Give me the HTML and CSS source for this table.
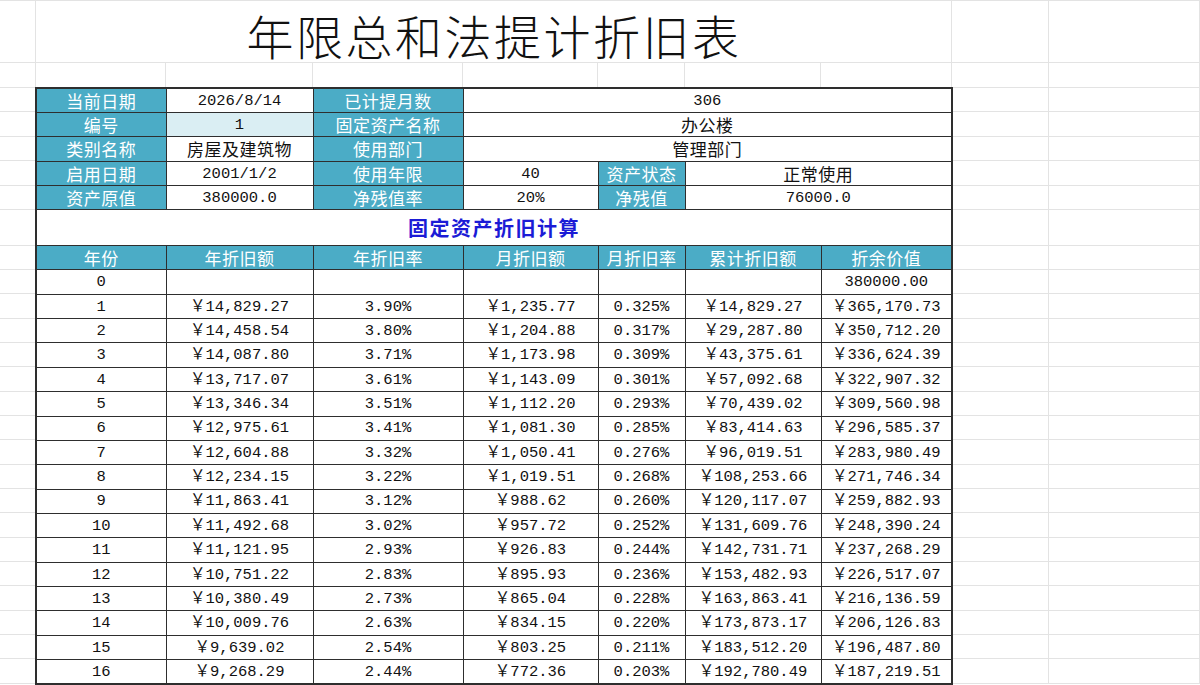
FILE: index.html
```html
<!DOCTYPE html>
<html lang="zh-CN">
<head>
<meta charset="utf-8">
<title>年限总和法提计折旧表</title>
<link rel="stylesheet" href="styles.css">
</head>
<body>
<table class="sheet">
  <colgroup>
    <col class="c0"><col class="c1"><col class="c2"><col class="c3"><col class="c4"><col class="c5"><col class="c6"><col class="c7"><col class="c8"><col class="c9">
  </colgroup>
  <tr class="r-title">
    <td class="g top"></td><td class="title top" colspan="7">年限总和法提计折旧表</td><td class="g top"></td><td class="g top"></td>
  </tr>
  <tr class="r-gap">
    <td class="g"></td><td class="g nb"></td><td class="g nb"></td><td class="g nb"></td><td class="g nb"></td><td class="g nb"></td><td class="g nb"></td><td class="g nb"></td><td class="g"></td><td class="g"></td>
  </tr>
  <tr class="r-info">
    <td class="g nr"></td><td class="b h L T">当前日期</td><td class="b T">2026/8/14</td><td class="b h T">已计提月数</td><td class="b R T" colspan="4">306</td><td class="g"></td><td class="g"></td>
  </tr>
  <tr class="r-info">
    <td class="g nr"></td><td class="b h L">编号</td><td class="b lb">1</td><td class="b h">固定资产名称</td><td class="b t R" colspan="4">办公楼</td><td class="g"></td><td class="g"></td>
  </tr>
  <tr class="r-info">
    <td class="g nr"></td><td class="b h L">类别名称</td><td class="b t">房屋及建筑物</td><td class="b h">使用部门</td><td class="b t R" colspan="4">管理部门</td><td class="g"></td><td class="g"></td>
  </tr>
  <tr class="r-info">
    <td class="g nr"></td><td class="b h L">启用日期</td><td class="b">2001/1/2</td><td class="b h">使用年限</td><td class="b">40</td><td class="b h">资产状态</td><td class="b t R" colspan="2">正常使用</td><td class="g"></td><td class="g"></td>
  </tr>
  <tr class="r-info">
    <td class="g nr"></td><td class="b h L">资产原值</td><td class="b">380000.0</td><td class="b h">净残值率</td><td class="b">20%</td><td class="b h">净残值</td><td class="b R" colspan="2">76000.0</td><td class="g"></td><td class="g"></td>
  </tr>
  <tr class="r-sec">
    <td class="g nr"></td><td class="b sec L R" colspan="7">固定资产折旧计算</td><td class="g"></td><td class="g"></td>
  </tr>
  <tr class="r-head">
    <td class="g nr"></td><td class="b h L">年份</td><td class="b h">年折旧额</td><td class="b h">年折旧率</td><td class="b h">月折旧额</td><td class="b h">月折旧率</td><td class="b h">累计折旧额</td><td class="b h R">折余价值</td><td class="g"></td><td class="g"></td>
  </tr>
  <tr class="r-data"><td class="g nr"></td><td class="b L">0</td><td class="b"></td><td class="b"></td><td class="b"></td><td class="b"></td><td class="b"></td><td class="b R">380000.00</td><td class="g"></td><td class="g"></td></tr>
  <tr class="r-data"><td class="g nr"></td><td class="b L">1</td><td class="b">￥14,829.27</td><td class="b">3.90%</td><td class="b">￥1,235.77</td><td class="b">0.325%</td><td class="b">￥14,829.27</td><td class="b R">￥365,170.73</td><td class="g"></td><td class="g"></td></tr>
  <tr class="r-data"><td class="g nr"></td><td class="b L">2</td><td class="b">￥14,458.54</td><td class="b">3.80%</td><td class="b">￥1,204.88</td><td class="b">0.317%</td><td class="b">￥29,287.80</td><td class="b R">￥350,712.20</td><td class="g"></td><td class="g"></td></tr>
  <tr class="r-data"><td class="g nr"></td><td class="b L">3</td><td class="b">￥14,087.80</td><td class="b">3.71%</td><td class="b">￥1,173.98</td><td class="b">0.309%</td><td class="b">￥43,375.61</td><td class="b R">￥336,624.39</td><td class="g"></td><td class="g"></td></tr>
  <tr class="r-data"><td class="g nr"></td><td class="b L">4</td><td class="b">￥13,717.07</td><td class="b">3.61%</td><td class="b">￥1,143.09</td><td class="b">0.301%</td><td class="b">￥57,092.68</td><td class="b R">￥322,907.32</td><td class="g"></td><td class="g"></td></tr>
  <tr class="r-data"><td class="g nr"></td><td class="b L">5</td><td class="b">￥13,346.34</td><td class="b">3.51%</td><td class="b">￥1,112.20</td><td class="b">0.293%</td><td class="b">￥70,439.02</td><td class="b R">￥309,560.98</td><td class="g"></td><td class="g"></td></tr>
  <tr class="r-data"><td class="g nr"></td><td class="b L">6</td><td class="b">￥12,975.61</td><td class="b">3.41%</td><td class="b">￥1,081.30</td><td class="b">0.285%</td><td class="b">￥83,414.63</td><td class="b R">￥296,585.37</td><td class="g"></td><td class="g"></td></tr>
  <tr class="r-data"><td class="g nr"></td><td class="b L">7</td><td class="b">￥12,604.88</td><td class="b">3.32%</td><td class="b">￥1,050.41</td><td class="b">0.276%</td><td class="b">￥96,019.51</td><td class="b R">￥283,980.49</td><td class="g"></td><td class="g"></td></tr>
  <tr class="r-data"><td class="g nr"></td><td class="b L">8</td><td class="b">￥12,234.15</td><td class="b">3.22%</td><td class="b">￥1,019.51</td><td class="b">0.268%</td><td class="b">￥108,253.66</td><td class="b R">￥271,746.34</td><td class="g"></td><td class="g"></td></tr>
  <tr class="r-data"><td class="g nr"></td><td class="b L">9</td><td class="b">￥11,863.41</td><td class="b">3.12%</td><td class="b">￥988.62</td><td class="b">0.260%</td><td class="b">￥120,117.07</td><td class="b R">￥259,882.93</td><td class="g"></td><td class="g"></td></tr>
  <tr class="r-data"><td class="g nr"></td><td class="b L">10</td><td class="b">￥11,492.68</td><td class="b">3.02%</td><td class="b">￥957.72</td><td class="b">0.252%</td><td class="b">￥131,609.76</td><td class="b R">￥248,390.24</td><td class="g"></td><td class="g"></td></tr>
  <tr class="r-data"><td class="g nr"></td><td class="b L">11</td><td class="b">￥11,121.95</td><td class="b">2.93%</td><td class="b">￥926.83</td><td class="b">0.244%</td><td class="b">￥142,731.71</td><td class="b R">￥237,268.29</td><td class="g"></td><td class="g"></td></tr>
  <tr class="r-data"><td class="g nr"></td><td class="b L">12</td><td class="b">￥10,751.22</td><td class="b">2.83%</td><td class="b">￥895.93</td><td class="b">0.236%</td><td class="b">￥153,482.93</td><td class="b R">￥226,517.07</td><td class="g"></td><td class="g"></td></tr>
  <tr class="r-data"><td class="g nr"></td><td class="b L">13</td><td class="b">￥10,380.49</td><td class="b">2.73%</td><td class="b">￥865.04</td><td class="b">0.228%</td><td class="b">￥163,863.41</td><td class="b R">￥216,136.59</td><td class="g"></td><td class="g"></td></tr>
  <tr class="r-data"><td class="g nr"></td><td class="b L">14</td><td class="b">￥10,009.76</td><td class="b">2.63%</td><td class="b">￥834.15</td><td class="b">0.220%</td><td class="b">￥173,873.17</td><td class="b R">￥206,126.83</td><td class="g"></td><td class="g"></td></tr>
  <tr class="r-data"><td class="g nr"></td><td class="b L">15</td><td class="b">￥9,639.02</td><td class="b">2.54%</td><td class="b">￥803.25</td><td class="b">0.211%</td><td class="b">￥183,512.20</td><td class="b R">￥196,487.80</td><td class="g"></td><td class="g"></td></tr>
  <tr class="r-data"><td class="g nr"></td><td class="b L Bm">16</td><td class="b Bm">￥9,268.29</td><td class="b Bm">2.44%</td><td class="b Bm">￥772.36</td><td class="b Bm">0.203%</td><td class="b Bm">￥192,780.49</td><td class="b R Bm">￥187,219.51</td><td class="g"></td><td class="g"></td></tr>
</table>
</body>
</html>
```
FILE: styles.css
```css
* { box-sizing: border-box; }
html, body { margin: 0; padding: 0; background: #fff; }
body { width: 1200px; height: 685px; overflow: hidden; }

.sheet {
  border-collapse: collapse;
  table-layout: fixed;
  width: 1200px;
  font-family: "Liberation Mono", "Noto Sans CJK SC", monospace;
  font-size: 15.5px;
  color: #111;
}
.c0 { width: 36px; }
.c1 { width: 130px; }
.c2 { width: 147px; }
.c3 { width: 150px; }
.c4 { width: 135px; }
.c5 { width: 87px; }
.c6 { width: 136px; }
.c7 { width: 131px; }
.c8 { width: 97px; }
.c9 { width: 151px; }

td {
  padding: 0;
  text-align: center;
  vertical-align: middle;
  line-height: 1;
  white-space: nowrap;
  overflow: hidden;
}

.r-title { height: 63px; }
.r-gap { height: 25px; }
.r-info { height: 24.4px; }
.r-sec { height: 36px; }
.r-head { height: 24px; }
.r-data { height: 24.35px; }

/* spreadsheet gridlines */
.g { box-shadow: inset -1px -1px 0 #e3e3e3; }
.g.nr { box-shadow: inset 0 -1px 0 #e3e3e3; }
.g.nb { box-shadow: inset -1px 0 0 #e3e3e3; }
.top.g { box-shadow: inset -1px -1px 0 #e3e3e3, inset 0 1px 0 #e3e3e3; }

.title {
  box-shadow: inset -1px -1px 0 #e3e3e3, inset 0 1px 0 #e3e3e3;
  font-family: "Noto Sans CJK SC", sans-serif;
  font-size: 47px;
  font-weight: 300;
  letter-spacing: 2.5px;
  line-height: 1;
  overflow: visible;
  color: #111;
  padding-top: 6px;
}

/* bordered table cells */
.b { border: 1px solid #2e2e2e; padding-top: 2px; }
.L { border-left-width: 2px; }
.R { border-right-width: 2px; }
.T { border-top-width: 2px; }
.Bm { border-bottom-width: 2px; }

.h {
  background: #4bacc6;
  color: #fff;
  font-family: "Noto Sans CJK SC", sans-serif;
  font-size: 17px;
  letter-spacing: 0.5px;
  padding-top: 0;
}
.t {
  font-family: "Noto Sans CJK SC", sans-serif;
  font-size: 17px;
  letter-spacing: 0.5px;
  padding-top: 0;
}
.lb { background: #daeef3; }

.sec {
  font-family: "Noto Sans CJK SC", sans-serif;
  font-size: 20px;
  font-weight: 700;
  letter-spacing: 1.5px;
  color: #1b1bd6;
  background: #fff;
  padding-top: 0;
}
```
